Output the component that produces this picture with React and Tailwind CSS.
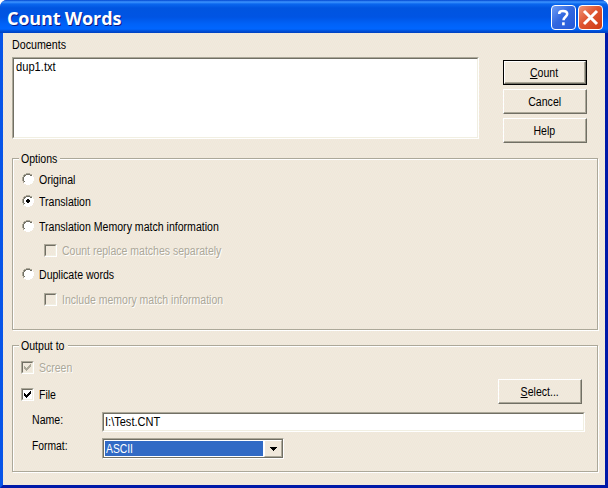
import React from "react";

const DITHER =
  "bg-[#f1e8dc] bg-[image:conic-gradient(#f3e4da_25%,#ededdd_25%_50%,#f3e4da_50%_75%,#ededdd_75%)] bg-[length:2px_4px]";

function T({ children, center, className = "scale-x-[0.88]" }) {
  return (
    <span className={`inline-block text-[12px] ${center ? "origin-center" : "origin-left"} ${className}`}>
      {children}
    </span>
  );
}

function Button({ children, isDefault, className = "" }) {
  return (
    <div className={`h-[25px] w-[84px] shrink-0 ${isDefault ? "border border-black" : ""} ${className}`}>
      <div className="h-full border border-t-white border-l-white border-r-[#716f64] border-b-[#716f64]">
        <div className="flex h-full items-center justify-center border-r border-b border-[#aca899] pt-[2px] leading-none">
          <T center>{children}</T>
        </div>
      </div>
    </div>
  );
}

function Radio({ checked }) {
  return (
    <svg width="12" height="12" viewBox="0 0 12 12" className="shrink-0" shapeRendering="crispEdges">
      <path d="M4 1h4v1h2v2h1v4h-1v2h-2v1h-4v-1h-2v-2h-1v-4h1v-2h2z" fill="#fff" />
      <path d="M4 0h4v1h-4zM2 1h2v1h-2zM8 1h2v1h-2zM1 2h1v2h-1zM0 4h1v4h-1zM1 8h1v2h-1z" fill="#aca899" />
      <path d="M4 1h4v1h-4zM2 2h2v1h-1v1h-1zM8 2h2v1h-2zM1 4h1v4h-1zM2 8h1v1h-1z" fill="#716f64" />
      <path d="M10 2h1v2h-1zM11 4h1v4h-1zM10 8h1v2h-1zM8 10h2v1h-2zM4 11h4v1h-4zM2 10h2v1h-2z" fill="#fff" />
      {checked && <path d="M5 4h2v1h1v2h-1v1h-2v-1h-1v-2h1z" fill="#000" />}
    </svg>
  );
}

function Checkbox({ checked, disabled }) {
  return (
    <div className="h-[13px] w-[13px] shrink-0 border border-t-[#aca899] border-l-[#aca899] border-r-white border-b-white">
      <div
        className={`h-full border border-t-[#716f64] border-l-[#716f64] border-r-[#f1efe2] border-b-[#f1efe2] ${
          disabled ? "" : "bg-white"
        }`}
      >
        {checked && (
          <svg width="9" height="9" viewBox="0 0 9 9" shapeRendering="crispEdges">
            <path
              d="M1 3h1v3h-1zM2 4h1v3h-1zM3 5h1v3h-1zM4 4h1v3h-1zM5 3h1v3h-1zM6 2h1v3h-1zM7 1h1v3h-1z"
              fill={disabled ? "#aca899" : "#000"}
            />
          </svg>
        )}
      </div>
    </div>
  );
}

function RadioRow({ checked, className, children }) {
  return (
    <div className={`flex h-[18px] items-center gap-[5px] ${className}`}>
      <Radio checked={checked} />
      <T className="mt-[2px] scale-x-[0.88]">{children}</T>
    </div>
  );
}

function CheckRow({ checked, disabled, className, children }) {
  return (
    <div
      className={`flex h-[19px] items-center gap-[5px] ${
        disabled ? "text-[#aca899] [text-shadow:1px_1px_0_#fff]" : ""
      } ${className}`}
    >
      <Checkbox checked={checked} disabled={disabled} />
      <T className="mt-[1px] scale-x-[0.875]">{children}</T>
    </div>
  );
}

function Group({ title, titleWidth, className, children }) {
  return (
    <div className={`w-[586px] border border-[#aca899] shadow-[1px_1px_0_#fff,inset_1px_1px_0_#fff] ${className}`}>
      <div className={`-mt-[8px] ml-[6px] h-[15px] pl-[2px] leading-[17px] ${titleWidth} ${DITHER}`}>
        <T>{title}</T>
      </div>
      {children}
    </div>
  );
}

export default function App() {
  return (
    <div className="h-[488px] w-[608px] overflow-hidden bg-white font-['Liberation_Sans',Arial,sans-serif] text-[12px] whitespace-nowrap text-black">
      <div className="flex h-full flex-col rounded-t-[7px] bg-[#0030c8]">
        <header className="flex h-[33px] shrink-0 items-center rounded-t-[7px] bg-[linear-gradient(180deg,#0046d0_0px,#3d95ff_2px,#0a67ee_4px,#0055e0_8px,#0054e3_17px,#0062f8_24px,#0066ff_29px,#0050d8_31px,#0040c0_33px)] pt-[2px] pr-[5px] pl-[7px]">
          <h1 className="flex-1 font-['Open_Sans',sans-serif] text-[18px] leading-none font-bold tracking-[-0.15px] text-white [text-shadow:1px_1px_0_#0a1883]">
            Count Words
          </h1>
          <div className="mr-[2px] flex h-[25px] w-[25px] items-center justify-center rounded-[4px] border border-white bg-[linear-gradient(135deg,#6f9df5,#3268e0_45%,#2458d8)]">
            <svg width="13" height="17" viewBox="0 0 13 17" fill="none" stroke="#fff" strokeWidth="2.6">
              <path d="M2.3 5V4Q2.6 2 6 2q4.2 0 4.2 3.1c0 2.5-3.7 2.8-3.7 6.2" />
              <path d="M6.4 13.3v3" />
            </svg>
          </div>
          <div className="flex h-[25px] w-[25px] items-center justify-center rounded-[4px] border border-white bg-[linear-gradient(135deg,#f09478,#df5531_45%,#cf3a12)]">
            <svg width="17" height="17" viewBox="0 0 17 17" stroke="#fff" strokeWidth="3">
              <path d="M2 2l13 13M15 2L2 15" />
            </svg>
          </div>
        </header>

        <div className="flex min-h-0 flex-1 border-r-[3px] border-b-[3px] border-l-[3px] border-l-[#0855e8] border-r-[#0019a8] border-b-[#0019a8]">
          <main className={`flex flex-1 flex-col pl-[9px] ${DITHER}`}>
            <section className="flex h-[125px] shrink-0">
              <div>
                <div className="h-[24px] pt-[5px] leading-[15px]"><T className="scale-x-[0.89]">Documents</T></div>
                <div className="h-[82px] w-[467px] border border-t-[#aca899] border-l-[#aca899] border-r-white border-b-white">
                  <div className="h-full border border-t-[#716f64] border-l-[#716f64] border-r-[#f1efe2] border-b-[#f1efe2] bg-white pl-[2px] leading-[16px]">
                    <T className="scale-x-[0.93]">dup1.txt</T>
                  </div>
                </div>
              </div>
              <div className="ml-[24px] flex flex-col gap-[4px] pt-[27px]">
                <Button isDefault><u>C</u>ount</Button>
                <Button>Cancel</Button>
                <Button>Help</Button>
              </div>
            </section>

            <Group title="Options" titleWidth="w-[41px]" className="h-[172px] shrink-0">
              <div className="flex flex-col pl-[9px]">
                <RadioRow className="mt-[4px]">Original</RadioRow>
                <RadioRow className="mt-[4px]" checked>Translation</RadioRow>
                <RadioRow className="mt-[7px]">Translation Memory match information</RadioRow>
                <CheckRow className="mt-[6px] ml-[22px]" disabled>Count replace matches separately</CheckRow>
                <RadioRow className="mt-[5px]">Duplicate words</RadioRow>
                <CheckRow className="mt-[7px] ml-[22px]" disabled>Include memory match information</CheckRow>
              </div>
            </Group>

            <Group title="Output to" titleWidth="w-[49px]" className="mt-[15px] h-[127px] shrink-0">
              <div className="flex justify-between pr-[15px] pl-[8px]">
                <div>
                  <CheckRow className="mt-[5px]" checked disabled>Screen</CheckRow>
                  <CheckRow className="mt-[8px]" checked>File</CheckRow>
                </div>
                <Button className="mt-[26px]"><u>S</u>elect...</Button>
              </div>
              <div className="mt-[8px] flex pl-[19px]">
                <div className="w-[70px] pt-[1px] leading-[15px]"><T>Name:</T></div>
                <div className="h-[20px] w-[483px] border border-t-[#aca899] border-l-[#aca899] border-r-white border-b-white">
                  <div className="h-full border border-t-[#716f64] border-l-[#716f64] border-r-[#f1efe2] border-b-[#f1efe2] bg-white pl-[1px] leading-[17px]">
                    <T className="scale-x-[0.92]">I:\Test.CNT</T>
                  </div>
                </div>
              </div>
              <div className="mt-[6px] flex pl-[19px]">
                <div className="w-[70px] pt-[1px] leading-[15px]"><T className="scale-x-[0.86]">Format:</T></div>
                <div className="h-[21px] w-[182px] border border-t-[#aca899] border-l-[#aca899] border-r-white border-b-white">
                  <div className="flex h-full border border-[#716f64] bg-white">
                    <div className="m-[1px] w-[158px] bg-[#316ac5] pl-[1px] leading-[16px] text-white"><T className="scale-x-[0.86]">ASCII</T></div>
                    <div className="flex-1 border border-t-white border-l-white border-r-[#aca899] border-b-[#aca899] bg-[#f0e8db]">
                      <svg width="16" height="15" viewBox="0 0 16 15" shapeRendering="crispEdges">
                        <path d="M5 6h7v1h-1v1h-1v1h-1v1h-1v-1h-1v-1h-1v-1h-1z" fill="#000" />
                      </svg>
                    </div>
                  </div>
                </div>
              </div>
            </Group>
          </main>
        </div>
      </div>
    </div>
  );
}
